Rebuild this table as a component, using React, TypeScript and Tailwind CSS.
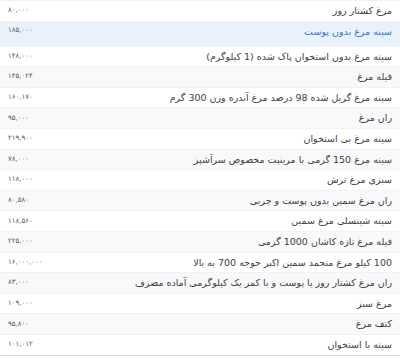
const rows: { name: string; price: string }[] = [
  { name: "مرغ کشتار روز", price: "۸۰,۰۰۰" },
  { name: "سینه مرغ بدون پوست", price: "۱۸۵,۰۰۰" },
  { name: "سینه مرغ بدون استخوان پاک شده (1 کیلوگرم)", price: "۱۴۸,۰۰۰" },
  { name: "فیله مرغ", price: "۱۴۵,۰۲۴" },
  { name: "سینه مرغ گریل شده 98 درصد مرغ آندره وزن 300 گرم", price: "۱۶۰,۱۷۰" },
  { name: "ران مرغ", price: "۹۵,۰۰۰" },
  { name: "سینه مرغ بی استخوان", price: "۲۱۹,۹۰۰" },
  { name: "سینه مرغ 150 گرمی با مرینیت مخصوص سرآشپز", price: "۷۸,۰۰۰" },
  { name: "سبزی مرغ ترش", price: "۱۱۸,۰۰۰" },
  { name: "ران مرغ سمین بدون پوست و چربی", price: "۸۰,۵۸۰" },
  { name: "سینه شینسلی مرغ سمین", price: "۱۱۸,۵۶۰" },
  { name: "فیله مرغ تازه کاشان 1000 گرمی", price: "۲۲۵,۰۰۰" },
  { name: "100 کیلو مرغ منجمد سمین اکبر جوجه 700 به بالا", price: "۱۶,۰۰۰,۰۰۰" },
  { name: "ران مرغ کشتار روز با پوست و با کمر یک کیلوگرمی آماده مصرف", price: "۸۳,۰۰۰" },
  { name: "مرغ سبز", price: "۱۰۹,۰۰۰" },
  { name: "کتف مرغ", price: "۹۵,۸۰۰" },
  { name: "سینه با استخوان", price: "۱۰۱,۰۱۲" },
];

export default function App() {
  return (
    <div className="w-[400px] h-[358px] overflow-hidden bg-white font-['DejaVu_Sans',sans-serif]">
      <div dir="rtl" className="flex flex-col border-b border-[#d9dcdf]">
        {rows.map((row, i) => {
          const active = i === 1;
          return (
            <div
              key={row.name}
              className={
                active
                  ? "flex items-start justify-between px-2 pt-[5px] h-[25px] bg-[#e9f1fb] border-t border-[#f0f2f4]"
                  : i % 2 === 1
                    ? "flex items-center justify-between px-2 h-[20.6px] bg-[#f8f9fa] border-t border-[#f0f2f4]"
                    : "flex items-center justify-between px-2 h-[20.6px] bg-white border-t border-[#f0f2f4]"
              }
            >
              <span
                className={
                  active
                    ? "text-[9.5px] leading-none text-[#3a78c2] whitespace-nowrap"
                    : "text-[9.5px] leading-none text-[#3d3d3d] whitespace-nowrap"
                }
              >
                {row.name}
              </span>
              <span className="text-[7px] leading-none text-[#555] whitespace-nowrap">
                {row.price}
              </span>
            </div>
          );
        })}
      </div>
    </div>
  );
}
